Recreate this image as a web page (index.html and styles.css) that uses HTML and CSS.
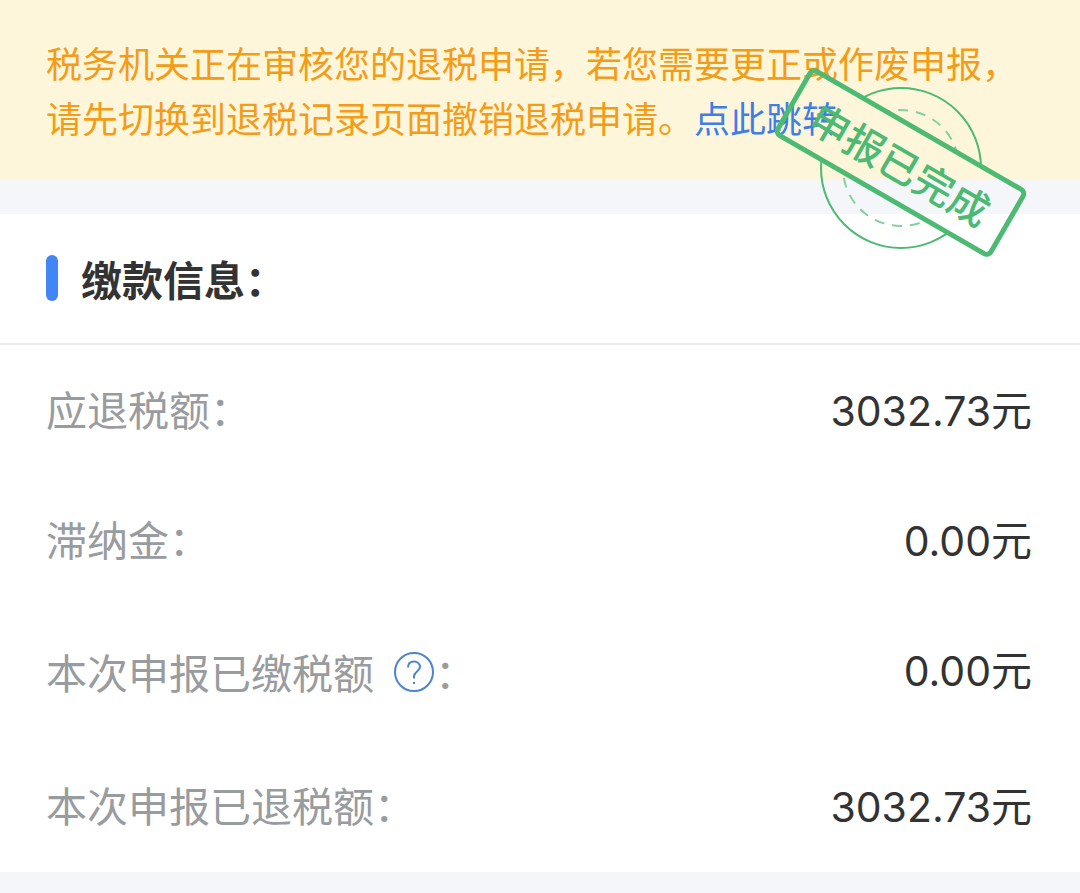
FILE: index.html
```html
<!DOCTYPE html>
<html lang="zh-CN">
<head>
<meta charset="utf-8">
<meta name="viewport" content="width=device-width, initial-scale=1">
<title>缴款信息</title>
<link rel="stylesheet" href="styles.css">
</head>
<body>
<main class="page">
  <div class="notice" role="status">
    <p class="notice-text">税务机关正在审核您的退税申请，若您需要更正或作废申报，请先切换到退税记录页面撤销退税申请。<a class="notice-link" href="#records">点此跳转</a></p>
    <svg class="stamp" viewBox="0 0 270 210" role="img" aria-label="申报已完成">
      <defs>
        <clipPath id="outside-label">
          <path clip-rule="evenodd" d="M0 0H270V210H0Z M52 9L265 132L229 196L16 73Z"/>
        </clipPath>
      </defs>
      <g clip-path="url(#outside-label)">
        <circle class="stamp-ring" cx="141" cy="108" r="80"/>
        <circle class="stamp-dash" cx="141" cy="108" r="58"/>
      </g>
      <g transform="rotate(30 140.5 102.5)">
        <rect class="stamp-frame" x="17.5" y="65.5" width="246" height="74" rx="5"/>
        <text class="stamp-text" x="141" y="120" text-anchor="middle">申报已完成</text>
      </g>
    </svg>
  </div>
  <section class="card">
    <h1 class="card-title">缴款信息：</h1>
    <dl class="rows">
      <div class="row"><dt>应退税额：</dt><dd>3032.73元</dd></div>
      <div class="row"><dt>滞纳金：</dt><dd>0.00元</dd></div>
      <div class="row row-help">
        <dt>本次申报已缴税额<button class="help" type="button" aria-label="说明"><svg viewBox="0 0 42 42" aria-hidden="true"><circle cx="21" cy="21" r="19"/><path d="M15 16.500C15 12.500 17.500 10.500 21 10.500S27 13 27 16C27 20 21 20.500 21 25.500V27.500"/><path d="M21 31V33"/></svg></button>：</dt>
        <dd>0.00元</dd>
      </div>
      <div class="row"><dt>本次申报已退税额：</dt><dd>3032.73元</dd></div>
    </dl>
  </section>
</main>
</body>
</html>
```
FILE: styles.css
```css
* { box-sizing: border-box; }

body {
  margin: 0;
  min-height: 100vh;
  background: #f4f6fa;
  color: #333;
  font-family: Inter, "Noto Sans CJK SC", sans-serif;
}

.notice {
  position: relative;
  padding: 38px 46px 32px;
  background: #fdf6da;
}

.notice-text {
  margin: 0;
  color: #f39c18;
  font-size: 36px;
  line-height: 55px;
}

.notice-link {
  color: #3f7de8;
  text-decoration: none;
}

/* Status stamp laid over the notice and the card below */
.stamp {
  position: absolute;
  top: 60px;
  right: 50px;
  width: 270px;
  height: 210px;
  pointer-events: none;
}

.stamp-ring,
.stamp-dash,
.stamp-frame {
  fill: none;
  stroke: #4dba74;
}

.stamp-ring { stroke-width: 2; }

.stamp-dash {
  stroke: #86cf9f;
  stroke-width: 2;
  stroke-dasharray: 10 8;
}

.stamp-frame { stroke-width: 5; }

.stamp-text {
  fill: #4dba74;
  font-size: 40px;
  font-weight: 500;
}

.card {
  margin-top: 34px;
  background: #fff;
}

.card-title {
  display: flex;
  align-items: center;
  gap: 23px;
  margin: 0;
  padding: 36px 46px 31px;
  border-bottom: 2px solid #e9eaec;
  font-size: 41px;
  font-weight: 700;
  line-height: 62px;
}

.card-title::before {
  content: "";
  width: 12px;
  height: 46px;
  margin-bottom: 6px;
  border-radius: 6px;
  background: #4285f4;
}

.rows {
  margin: 0;
  padding-top: 1px;
}

.row {
  display: flex;
  align-items: center;
  justify-content: space-between;
  min-height: 130px;
  padding: 0 48px 0 46px;
  font-size: 41px;
  line-height: 60px;
}

.row-help { min-height: 136px; }

.row dt {
  display: flex;
  align-items: center;
  color: #999c9f;
}

.row dd { margin: 0; }

.row-help dd { padding-bottom: 6px; }

.help {
  width: 42px;
  height: 42px;
  margin-bottom: 4px;
  margin-left: 19px;
  padding: 0;
  border: 0;
  background: none;
}

.help svg {
  display: block;
  fill: none;
  stroke: #4d84cf;
  stroke-width: 2;
}
```
